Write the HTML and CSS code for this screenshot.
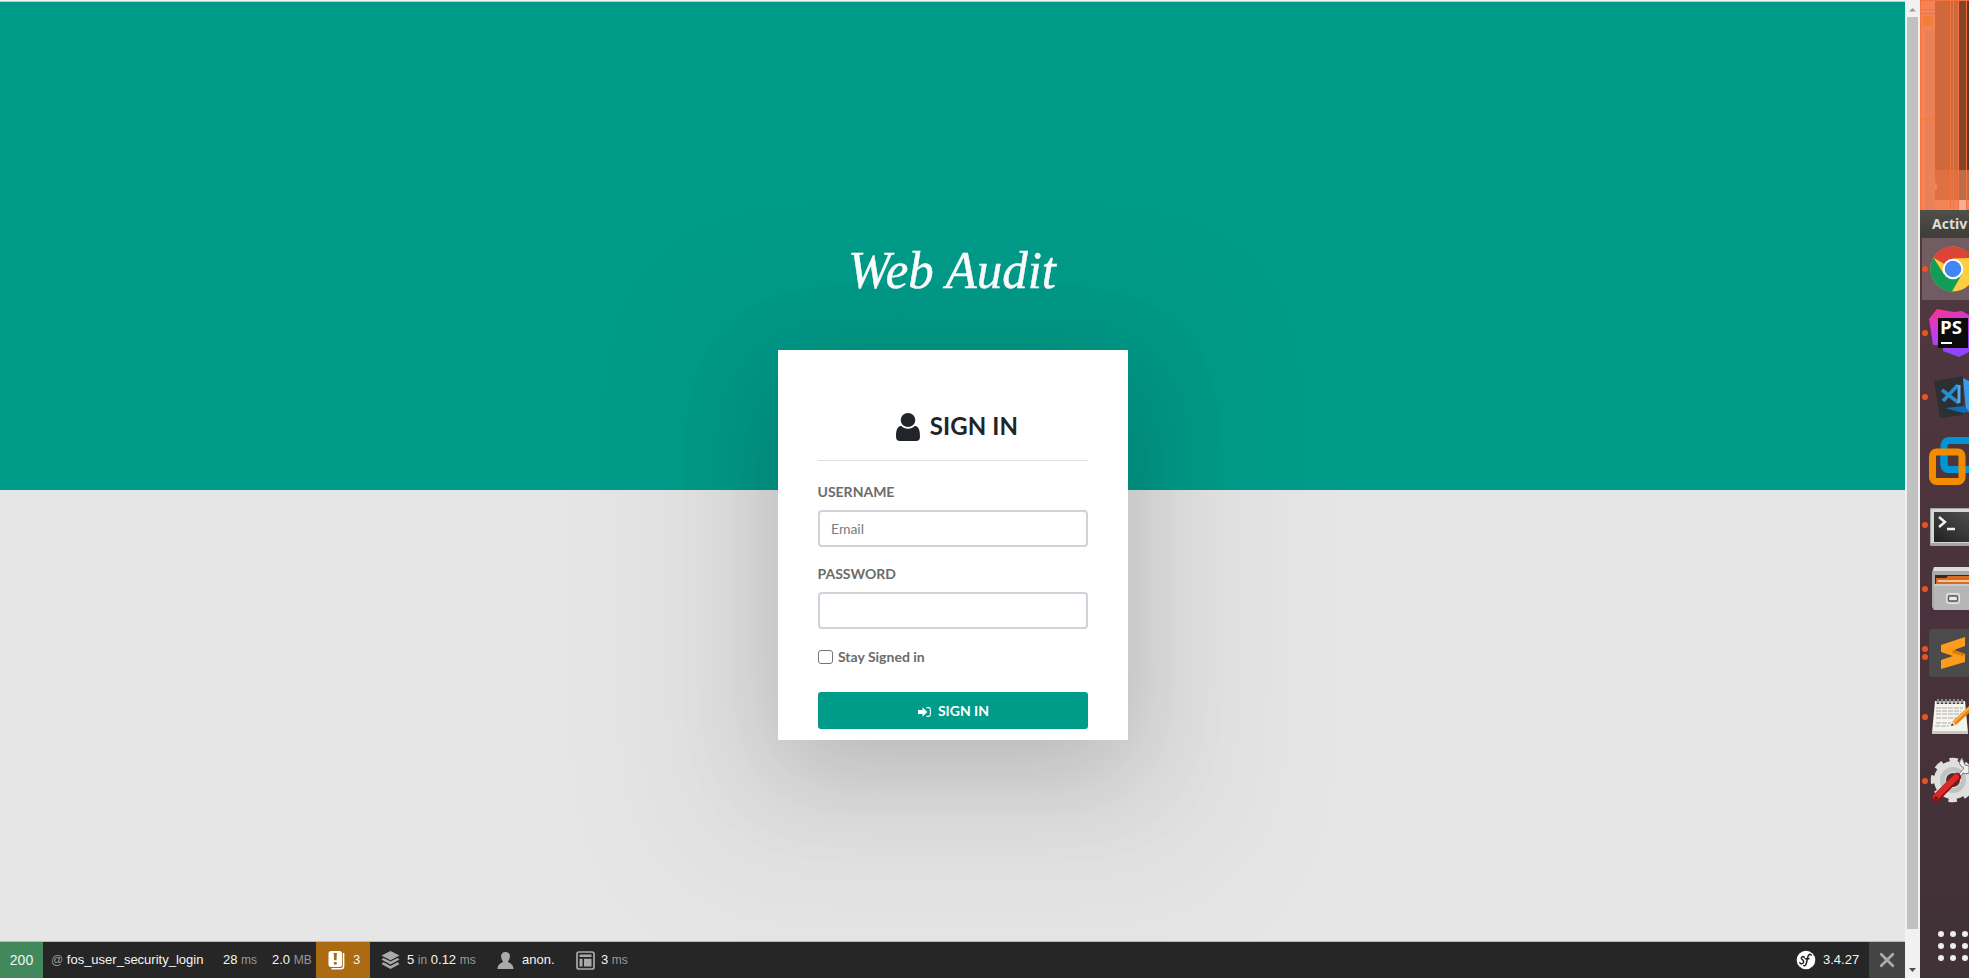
FILE: index.html
```html
<!DOCTYPE html>
<html lang="en">
<head>
<meta charset="utf-8">
<title>Web Audit</title>
<link rel="stylesheet" href="styles.css">
</head>
<body>
<div class="screen">
  <div class="browser">
    <main class="page">
      <div class="cover"></div>
      <section class="login">
        <h1 class="logo"><svg width="230" height="80" viewBox="-8 -10 230 80"><text class="logo-text" x="2" y="43" textLength="208" lengthAdjust="spacingAndGlyphs">Web Audit</text></svg></h1>
        <form class="card">
          <h3 class="title"><svg width="24" height="28" viewBox="0 0 24 28"><ellipse cx="12" cy="7" rx="7.3" ry="7"/><path d="M5 12.8C8.500 16.800 15.500 16.800 19 12.800C23 13.500 24 18 24 23.500Q24 28 20 28H4Q0 28 0 23.500C0 18 1 13.500 5 12.800Z"/></svg><span>SIGN IN</span></h3>
          <label class="label">USERNAME</label>
          <input class="input" type="text" placeholder="Email">
          <label class="label">PASSWORD</label>
          <input class="input" type="password">
          <div class="stay"><span class="box"></span><span class="stay-text">Stay Signed in</span></div>
          <button class="submit" type="button"><svg width="13" height="10" viewBox="0 0 13 10"><path d="M0 3H4.500V.2L9.300 5 4.500 9.800V7H0Z" fill="#fff"/><path d="M8.500 .6H10.500Q12.400.6 12.400 2.500V7.500Q12.400 9.400 10.500 9.400H8.500" fill="none" stroke="#fff" stroke-width="1.100"/></svg><span>SIGN IN</span></button>
        </form>
      </section>
    </main>
    <footer class="toolbar">
      <div class="status">200</div>
      <div class="route"><i>@</i> fos_user_security_login</div>
      <div class="time">28 <i>ms</i></div>
      <div class="memory">2.0 <i>MB</i></div>
      <div class="logs"><svg width="17" height="20" viewBox="0 0 17 20"><path d="M15.600 3V16Q15.600 18.800 13 18.800H3.500" fill="none" stroke="#fff" stroke-width="1.500"/><path d="M3 1H11.500Q14 1 14 3.500V14.500Q14 17 11.500 17H3Q.5 17 .5 14.500V3.500Q.5 1 3 1Z" fill="#fff"/><path d="M5.700 3H8.900L8.500 10.200H6.100ZM5.900 12H8.700V14.600H5.900Z" fill="#a46a1f"/></svg><span>3</span></div>
      <div class="db"><svg width="19" height="20" viewBox="0 0 19 20" fill="#aaa"><path d="M9.500 1L18.500 5.600 9.500 10.300.5 5.600Z"/><path d="M2.500 8L9.500 11.600 16.500 8 18.500 9.600 9.500 14.600.5 9.600Z"/><path d="M2.500 12.300L9.500 16 16.500 12.300 18.500 13.900 9.500 19 .5 13.900Z"/></svg><span>5 <i>in</i> 0.12 <i>ms</i></span></div>
      <div class="user"><svg width="17" height="19" viewBox="0 0 17 19" fill="#aaa"><path d="M8.500 1C11.500 1 13 3 12.900 5.500C12.800 7.800 11.800 9.500 11 10.500C11 12 16.500 12 16.500 18H.5C.5 12 6 12 6 10.500C5.200 9.500 4.200 7.800 4.100 5.500C4 3 5.500 1 8.500 1Z"/></svg><span>anon.</span></div>
      <div class="twig"><svg width="19" height="19" viewBox="0 0 19 19"><rect x="1" y="1" width="17" height="17" rx="2" fill="none" stroke="#aaa" stroke-width="1.700"/><path d="M3.500 3.500H15.500V6H3.500ZM3.500 7.700H6.500V15.500H3.500ZM8 7.700H15.500V15.500H8Z" fill="#aaa"/></svg><span>3 <i>ms</i></span></div>
      <div class="version"><svg width="20" height="20" viewBox="0 0 20 20"><circle cx="10" cy="10" r="9.300" fill="#fff"/><g fill="none" stroke="#222" stroke-width="1.500" stroke-linecap="round"><path d="M8.300 7.400C7.800 6 5 6.600 5.300 8.400C5.600 9.800 8 9.800 7.600 12.100C7.200 14.200 4.400 14.200 3.900 12.700"/><path d="M15.200 5.200C14.300 3.400 12.400 4.500 11.800 7L10.300 13.500C9.800 15.500 8.800 16.200 7.800 15.600M9.300 8.800H13"/></g></svg><span>3.4.27</span></div>
      <div class="close"><svg width="16" height="16" viewBox="0 0 16 16"><path d="M2.200 2.200L13.800 13.800M13.800 2.200L2.200 13.800" stroke="#aaa" stroke-width="2.800" stroke-linecap="round"/></svg></div>
    </footer>
  </div>
  <div class="scrollbar">
    <svg width="15" height="17" viewBox="0 0 15 17"><path d="M4 11.500H11L7.500 8Z" fill="#9b9b9b"/></svg>
    <div class="thumb"></div>
    <svg class="down" width="15" height="15" viewBox="0 0 15 15"><path d="M4 5H11L7.500 9Z" fill="#505050"/></svg>
  </div>
  <aside class="desktop">
    <svg width="49" height="210" viewBox="0 0 49 210"><rect width="49" height="210" fill="#f58358"/><path d="M5 30H15V210H5Z" fill="#eb8059"/><path d="M15 0H39V170H15Z" fill="#d1683c"/><path d="M39 0H49V170H39Z" fill="#854427"/><path d="M15 170H39V200H15Z" fill="#df7041"/><path d="M39 170H49V200H39Z" fill="#b96d49"/><path d="M39 200H47V210H39Z" fill="#f2b097"/><rect x="3" y="16" width="10" height="10" fill="#f17f3b"/><path d="M0 .5H49M1 9.500H15M1 13.500H15M30.500 0V210M33.500 0V210M38.500 0V210M46.500 0V210M.5 0V210" stroke="#f47440"/><path d="M1 119H15" stroke="#f17f3b" stroke-width="2"/><path d="M15 183Q17 182 17 186V190H15Z" fill="#f58358"/><path d="M48 1V170" stroke="#3d2720"/></svg>
    <div class="activities">Activ</div>
    <div class="dock">
      <div class="app active"><svg width="49" height="64" viewBox="0 0 49 64"><circle cx="33" cy="32" r="22.500" fill="#ffcd40"/><path d="M33 32L13.500 20.800A22.500 22.500 0 0 1 52.500 20.800L33 21.500Z" fill="#db4437"/><path d="M13.500 20.800A22.500 22.500 0 0 0 32 54.500L42 37 33 32 23.900 37.300Z" fill="#0f9d58"/><circle cx="33" cy="32" r="10.300" fill="#fff"/><circle cx="33" cy="32" r="8.300" fill="#4285f4"/><circle class="dot" cx="5" cy="32" r="3"/></svg></div>
      <div class="app"><svg width="49" height="64" viewBox="0 0 49 64"><defs><linearGradient id="ps" x1="0" y1="0" x2=".3" y2="1"><stop stop-color="#ff318c"/><stop offset=".5" stop-color="#c63be8"/><stop offset="1" stop-color="#8f45ff"/></linearGradient></defs><path d="M9 18L17 8 34 11 42 10 55 18V48L39 56 23 50V44H13Z" fill="url(#ps)"/><rect x="18" y="17" width="30" height="30" fill="#0b0b0b"/><text class="ps" x="20" y="33" textLength="22" lengthAdjust="spacingAndGlyphs">PS</text><path d="M21 42H32" stroke="#fff" stroke-width="2"/><circle class="dot" cx="5" cy="32" r="3"/></svg></div>
      <div class="app"><svg width="49" height="64" viewBox="0 0 49 64"><path d="M14 16L43 11V50L20 53Z" fill="#2d3033"/><path d="M43 13L49 16V47L46 46Z" fill="#399be6"/><path d="M25 43L44 41 49 46 43 48Z" fill="#0c70b8"/><path d="M22 25L39 38M38 20L23 36" fill="none" stroke="#278dcc" stroke-width="3.500"/><path d="M39 20V38" stroke="#56a9e8" stroke-width="3"/><circle class="dot" cx="5" cy="32" r="3"/></svg></div>
      <div class="app"><svg width="49" height="64" viewBox="0 0 49 64"><rect x="24" y="11.500" width="33" height="29" rx="5" fill="none" stroke="#0095d7" stroke-width="7"/><rect x="12.500" y="23" width="29.500" height="29.500" rx="4" fill="none" stroke="#f38b00" stroke-width="7"/><path d="M24 27V35Q24 40.500 29 40.500H38" fill="none" stroke="#0095d7" stroke-width="7"/></svg></div>
      <div class="app"><svg width="49" height="64" viewBox="0 0 49 64"><defs><linearGradient id="term" x1="0" y1="1" x2="1" y2="0"><stop stop-color="#202020"/><stop offset="1" stop-color="#555"/></linearGradient></defs><rect x="10" y="15" width="50" height="38" rx="1" fill="#a5a5a5"/><rect x="11" y="16" width="49" height="34" fill="#d6d6d6"/><rect x="14" y="19" width="45" height="30" fill="url(#term)"/><path d="M19 24L25 29 19 34M27 36H35" fill="none" stroke="#f2f2f2" stroke-width="2.400"/><circle class="dot" cx="5" cy="32" r="3"/></svg></div>
      <div class="app"><svg width="49" height="64" viewBox="0 0 49 64"><path d="M14 10H49V53H14L12 50V15Z" fill="#aaa"/><path d="M14 10H49V14H13Z" fill="#ddd"/><path d="M15 18H49V27H15Z" fill="#352a24"/><path d="M16 21H26L28 19H49V27H16Z" fill="#d56a25"/><path d="M18 24H49" stroke="#ffe1ba" stroke-width="1.500"/><path d="M14 27H49V53H14Z" fill="#b6b6b6"/><path d="M14 28H49" stroke="#dedede"/><rect x="26.500" y="36.500" width="13" height="10" rx="2" fill="#ccc" stroke="#e6e6e6"/><rect x="28.500" y="39" width="9" height="5" rx="1" fill="#e8e8e8" stroke="#555" stroke-width="1.300"/><circle class="dot" cx="5" cy="32" r="3"/></svg></div>
      <div class="app"><svg width="49" height="64" viewBox="0 0 49 64"><rect x="9" y="8" width="50" height="48" rx="3" fill="#4b4b4b"/><path d="M21 24L45 16V25L34 29 45 33V41L21 48V39L33 35 21 31Z" fill="#ff9c1b"/><path d="M33 29L45 33 43 35 32 32Z" fill="#e07b05"/><circle class="dot" cx="5" cy="28" r="3"/><circle class="dot" cx="5" cy="36" r="3"/></svg></div>
      <div class="app"><svg width="49" height="64" viewBox="0 0 49 64"><path d="M15 16H45L48 48H12Z" fill="#f6f5ed"/><path d="M12 46H48V49H12Z" fill="#c9c9bd"/><path d="M16 23H43M16 26H41M16 29H42M16 33H39M16 38H31M15 41H29" stroke="#aaa" stroke-dasharray="5 1"/><path d="M18 13V19M22 13V19M26 13V19M30 13V19M34 13V19M38 13V19M42 13V19" stroke="#393939" stroke-width="2.500"/><path d="M18 14V18M22 14V18M26 14V18M30 14V18M34 14V18M38 14V18M42 14V18" stroke="#ddd"/><path d="M31 41L33 36 49 21V28L36 40Z" fill="#e6861a"/><path d="M34 37L49 23" stroke="#ffb950" stroke-width="1.500"/><path d="M31 41L33 36 36 40Z" fill="#f4d59a"/><path d="M31 41L32 38.500 33.500 40Z" fill="#111"/><circle class="dot" cx="5" cy="32" r="3"/></svg></div>
      <div class="app"><svg width="49" height="64" viewBox="0 0 49 64"><circle cx="33" cy="31" r="19.500" fill="none" stroke="#dedede" stroke-width="5.500" stroke-dasharray="8.200 7.115" stroke-dashoffset="4"/><circle cx="33" cy="31" r="13" fill="none" stroke="#dedede" stroke-width="12"/><circle cx="33" cy="31" r="10.500" fill="none" stroke="#c2c2c2" stroke-width="5"/><path d="M38 26L44 19Q36 15 42 9L45 16 49 17V24Q46 26 43 24L39 29Z" fill="#efefef" stroke="#777"/><path d="M16 49L37 28" stroke="#8e1010" stroke-width="8" stroke-linecap="round"/><path d="M16 48L36 28" stroke="#d92b2b" stroke-width="6" stroke-linecap="round"/><circle cx="16" cy="49" r="1.700" fill="#6b1010"/><circle class="dot" cx="5" cy="32" r="3"/></svg></div>
      <svg class="grid" width="49" height="32" viewBox="0 0 49 32" fill="#eee"><circle cx="21" cy="4" r="3"/><circle cx="33" cy="4" r="3"/><circle cx="45" cy="4" r="3"/><circle cx="21" cy="16" r="3"/><circle cx="33" cy="16" r="3"/><circle cx="45" cy="16" r="3"/><circle cx="21" cy="28" r="3"/><circle cx="33" cy="28" r="3"/><circle cx="45" cy="28" r="3"/></svg>
    </div>
  </aside>
</div>
</body>
</html>
```
FILE: styles.css
```css
* { box-sizing: border-box; }
body { margin: 0; overflow: hidden; font-family: Lato, sans-serif; font-size: 14px; }
svg { display: block; flex: none; }
.screen { display: flex; width: 1969px; height: 978px; overflow: hidden; }
.browser { display: flex; flex-direction: column; width: 1905px; height: 978px; border-top: 1px solid #f2f2f2; overflow: hidden; }
.page { display: grid; grid-template: 940px / 1905px; background: #e6e6e6; border-top: 1px solid #c7cccb; height: 941px; flex: none; overflow: hidden; }
.cover { grid-area: 1 / 1; height: 488px; background: #009c8a; }
.login { grid-area: 1 / 1; display: flex; flex-direction: column; align-items: center; padding-top: 233px; }
.logo { margin: 0; height: 115px; }
.logo-text { font: italic 400 53px "Liberation Serif", serif; fill: #fff; stroke: #fff; stroke-width: .5px; }
.card { width: 350px; height: 390px; padding: 62px 40px 0; background: #fff; box-shadow: 0 29px 147.5px 102.5px rgba(0,0,0,.05), 0 29px 95px 0 rgba(0,0,0,.16); }
.title { display: flex; justify-content: center; gap: 10px; margin: 0 0 20px; height: 49px; border-bottom: 1px solid #ddd; color: #212529; fill: #212529; font-size: 24px; line-height: 27px; font-weight: 700; padding-left: 9px; }
.title svg { margin-top: 1px; }
.title span { letter-spacing: .1px; }
.label { display: block; height: 21px; margin-bottom: 8px; line-height: 21px; font-weight: 700; color: #6b6b6b; }
.input { display: block; width: 100%; height: 37px; margin-bottom: 16px; padding: 6px 12px 6px 11.5px; border: 2px solid #ced4da; border-radius: 4px; background: #fff; font: 14px Lato, sans-serif; }
.input::placeholder { color: #747c85; opacity: 1; }
.stay { display: flex; align-items: center; gap: 5.5px; height: 24px; color: #6b6b6b; font-weight: 700; }
.stay-text { margin-top: -2px; }
.box { width: 15px; height: 14px; border: 1.5px solid #747474; border-radius: 3px; }
.submit { display: flex; align-items: center; justify-content: center; gap: 7px; width: 100%; height: 37px; margin-top: 23px; padding: 0 0 0 2px; border: 0; border-radius: 3px; background: #009c8a; color: #fff; font: 700 14px Lato, sans-serif; }
.submit svg { margin-top: 2px; }
.toolbar { display: flex; flex: none; height: 36px; background: #262626; color: #f5f5f5; font: 13px/36px "Liberation Sans", Arial, sans-serif; white-space: pre; box-shadow: 0 -1px 0 rgba(0,0,0,.2); position: relative; }
.toolbar > div { display: flex; align-items: center; flex: none; }
.toolbar i { font-style: normal; font-size: 12px; color: #999; }
.toolbar .status { width: 43px; justify-content: center; background: #42885d; font-size: 14px; }
.toolbar .route { width: 180px; padding-left: 8px; }
.toolbar .time { width: 49px; }
.toolbar .memory { width: 44px; }
.toolbar .logs { width: 54px; padding-left: 12px; gap: 8px; background: #aa6b12; }
.toolbar .db { width: 126px; padding-left: 11px; gap: 7px; }
.toolbar .user { width: 80px; padding-left: 1px; gap: 8px; }
.toolbar .twig { padding-left: 0; gap: 6px; }
.toolbar .version { margin-left: auto; width: 73px; gap: 7px; }
.toolbar .close { width: 36px; justify-content: center; background: #444; }
.scrollbar { display: flex; flex-direction: column; align-items: center; width: 15px; background: #f1f1f1; }
.thumb { width: 11px; height: 912px; background: #c1c1c1; }
.down { margin-top: auto; }
.desktop { width: 49px; height: 978px; overflow: hidden; background: #48333b; }
.activities { height: 27px; padding-left: 12px; background: linear-gradient(#504f49, #3e3d38); color: #ddd; font: 700 14px/28px "Noto Sans", sans-serif; white-space: nowrap; }
.dock { background: linear-gradient(#513840, #49323b 55%, #403237); height: 741px; }
.app { height: 64px; }
.active { background: linear-gradient(#705c61, #705c61) 2px 1px / 60px 62px no-repeat; }
.dot { fill: #e95420; }
.ps { font: 700 17px "Open Sans", sans-serif; fill: #fff; }
.grid { margin-top: 117px; }
```
